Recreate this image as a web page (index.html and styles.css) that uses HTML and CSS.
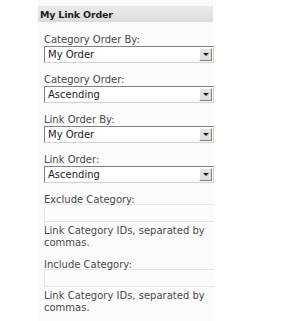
FILE: index.html
```html
<!DOCTYPE html>
<html>
<head>
<meta charset="utf-8">
<link rel="stylesheet" href="styles.css">
</head>
<body>
<div class="panel">
  <div class="header"><span class="title">My Link Order</span></div>
  <div class="body">
    <div class="field">
      <div class="label">Category Order By:</div>
      <div class="select"><span class="value">My Order</span><span class="btn"><span class="tri"></span></span></div>
    </div>
    <div class="field">
      <div class="label">Category Order:</div>
      <div class="select"><span class="value">Ascending</span><span class="btn"><span class="tri"></span></span></div>
    </div>
    <div class="field">
      <div class="label">Link Order By:</div>
      <div class="select"><span class="value">My Order</span><span class="btn"><span class="tri"></span></span></div>
    </div>
    <div class="field">
      <div class="label">Link Order:</div>
      <div class="select"><span class="value">Ascending</span><span class="btn"><span class="tri"></span></span></div>
    </div>
    <div class="field text-field">
      <div class="label">Exclude Category:</div>
      <div class="input"></div>
      <div class="desc">Link Category IDs, separated by commas.</div>
    </div>
    <div class="field text-field">
      <div class="label">Include Category:</div>
      <div class="input"></div>
      <div class="desc">Link Category IDs, separated by commas.</div>
    </div>
  </div>
</div>
</body>
</html>
```
FILE: styles.css
```css
html, body {
  margin: 0;
  padding: 0;
  background: #ffffff;
}
body {
  font-family: "DejaVu Sans", Verdana, sans-serif;
  font-size: 10px;
  color: #4a4a4a;
}
.panel {
  margin-left: 38px;
  width: 175px;
  height: 321px;
  background: #fbfbfb;
  padding-top: 6px;
  box-sizing: border-box;
}
.header {
  height: 16px;
  background: linear-gradient(#e9e9e9, #e4e4e4 60%, #dadada);
  display: flex;
  align-items: center;
  padding-left: 2px;
}
.title {
  font-weight: bold;
  font-size: 9.5px;
  letter-spacing: -0.2px;
  color: #1e1e1e;
}
.body {
  padding: 12px 0 0 6px;
}
.field {
  margin-bottom: 11px;
}
.label {
  line-height: 12px;
  height: 12px;
}
.select {
  width: 170px;
  height: 17px;
  box-sizing: border-box;
  border: 1px solid #808080;
  border-right-color: #d4d0c8;
  border-bottom-color: #d4d0c8;
  background: #fff;
  display: flex;
  align-items: center;
  justify-content: space-between;
}
.value {
  padding-left: 3px;
  color: #1a1a1a;
  line-height: 15px;
}
.btn {
  width: 13px;
  height: 13px;
  margin-right: 1px;
  background: #e2e0da;
  border: 1px solid;
  border-color: #fff #808080 #808080 #fff;
  box-sizing: border-box;
  display: flex;
  align-items: center;
  justify-content: center;
}
.tri {
  width: 0;
  height: 0;
  border-left: 3px solid transparent;
  border-right: 3px solid transparent;
  border-top: 3px solid #1a1a2a;
}
.text-field {
  margin-bottom: 10px;
}
.input {
  width: 170px;
  height: 18px;
  box-sizing: border-box;
  border: 1px solid #e6e6e6;
  border-right: none;
  background: #fcfcfc;
  margin-top: -2px;
}
.desc {
  margin-top: 3px;
  line-height: 12px;
  width: 165px;
}
```
